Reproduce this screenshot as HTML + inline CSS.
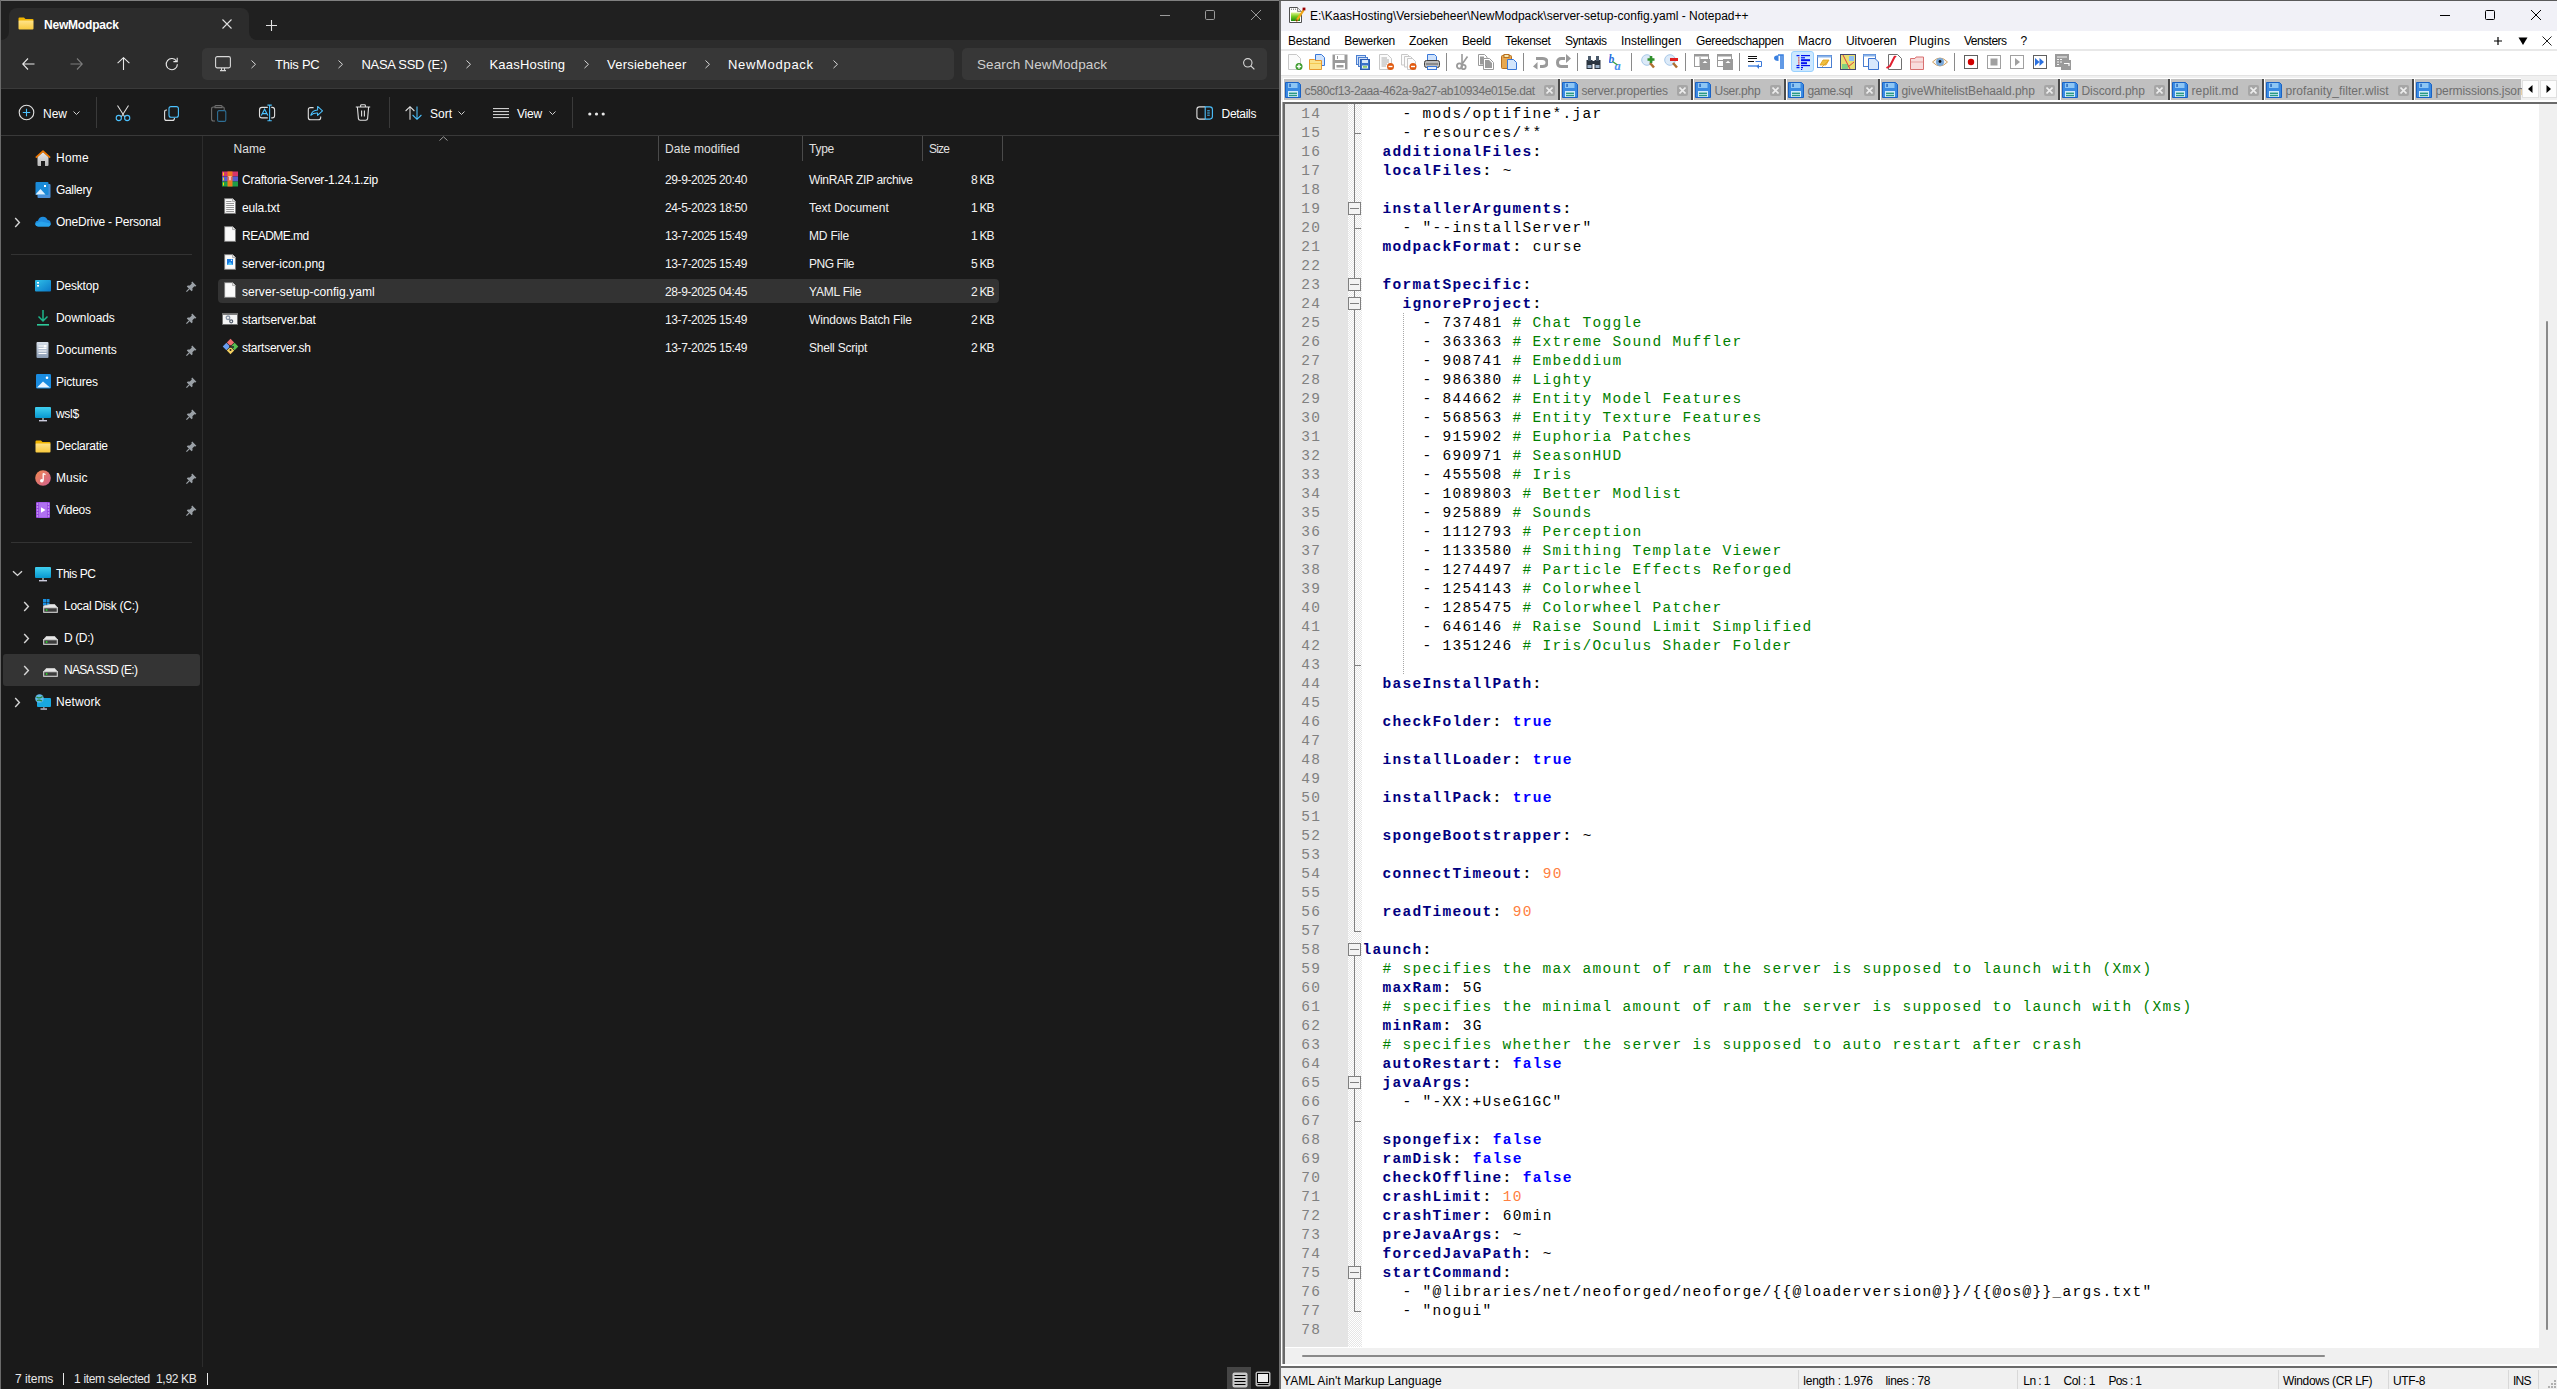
<!DOCTYPE html>
<html><head><meta charset="utf-8">
<style>
*{margin:0;padding:0;box-sizing:border-box}
html,body{width:2557px;height:1389px;overflow:hidden;background:#1a1a1a;font-family:"Liberation Sans",sans-serif;position:relative}
.a{position:absolute;display:block}
.t{position:absolute;white-space:pre;line-height:1}
.mono{font-family:"Liberation Mono",monospace;margin:0;white-space:pre}
.code .d{color:#000}.code .k{color:#000080;font-weight:bold}.code .o{color:#000;font-weight:bold}.code .c{color:#008000}.code .b{color:#0000ff;font-weight:bold}.code .n{color:#ff8040}
</style></head><body>
<div class="a" style="left:0px;top:0px;width:1279px;height:1389px;background:#1a1a1a;"></div><div class="a" style="left:1px;top:1px;width:1278px;height:39px;background:#202020;"></div><div class="a" style="left:1px;top:40px;width:1278px;height:48px;background:#2c2c2c;"></div><div class="a" style="left:1px;top:88px;width:1278px;height:1px;background:#3a3a3a;"></div><div class="a" style="left:1px;top:89px;width:1278px;height:46px;background:#1a1a1a;"></div><div class="a" style="left:1px;top:135px;width:1278px;height:1px;background:#393939;"></div><div class="a" style="left:0px;top:0px;width:1279px;height:1px;background:#808080;"></div><div class="a" style="left:0px;top:0px;width:1px;height:1389px;background:#6a6a6a;"></div><div class="a" style="left:1px;top:32px;width:8px;height:8px;background:#2c2c2c;"></div><div class="a" style="left:1px;top:24px;width:8px;height:16px;background:#202020;border-bottom-right-radius:8px"></div><div class="a" style="left:249px;top:32px;width:8px;height:8px;background:#2c2c2c;"></div><div class="a" style="left:249px;top:24px;width:8px;height:16px;background:#202020;border-bottom-left-radius:8px"></div><div class="a" style="left:9px;top:8px;width:240px;height:33px;background:#2c2c2c;border-radius:8px 8px 0 0"></div><svg class="a" style="left:18px;top:17px" width="16" height="13" viewBox="0 0 16 13"><defs><linearGradient id="fg1817" x1="0" y1="0" x2="0" y2="1"><stop offset="0" stop-color="#ffe38a"/><stop offset="1" stop-color="#f8c93d"/></linearGradient></defs>
<path d="M0.5 1.5 Q0.5 0.5 1.5 0.5 H6 L7.5 2 H14.5 Q15.5 2 15.5 3 V4 H0.5Z" fill="#f0b400"/>
<rect x="0.5" y="3.5" width="15" height="9" rx="1" fill="url(#fg1817)"/></svg><div class="t" style="left:44px;top:18.84px;font-size:12px;color:#fff;font-weight:700;letter-spacing:-0.199px;">NewModpack</div><svg class="a" style="left:222px;top:19px" width="10" height="10" viewBox="0 0 10 10"><path d="M0.5 0.5L9.5 9.5M9.5 0.5L0.5 9.5" stroke="#e0e0e0" stroke-width="1.1"/></svg><svg class="a" style="left:266px;top:20px" width="11" height="11" viewBox="0 0 11 11"><path d="M5.5 0V11M0 5.5H11" stroke="#e0e0e0" stroke-width="1.1"/></svg><div class="a" style="left:1160px;top:15px;width:10px;height:1px;background:#9a9a9a;"></div><svg class="a" style="left:1205px;top:10px" width="10" height="10" viewBox="0 0 10 10"><rect x="0.5" y="0.5" width="9" height="9" rx="1.2" fill="none" stroke="#9a9a9a" stroke-width="1"/></svg><svg class="a" style="left:1251px;top:10px" width="10" height="10" viewBox="0 0 10 10"><path d="M0 0L10 10M10 0L0 10" stroke="#9a9a9a" stroke-width="1"/></svg><svg class="a" style="left:22px;top:58px" width="13" height="12" viewBox="0 0 13 12"><path d="M6 0.5L0.7 6L6 11.5M0.7 6H12.5" fill="none" stroke="#e8e8e8" stroke-width="1.1"/></svg><svg class="a" style="left:70px;top:58px" width="13" height="12" viewBox="0 0 13 12"><path d="M7 0.5L12.3 6L7 11.5M12.3 6H0.5" fill="none" stroke="#7c7c7c" stroke-width="1.1"/></svg><svg class="a" style="left:117px;top:57px" width="13" height="13" viewBox="0 0 13 13"><path d="M0.6 6.2L6.5 0.7L12.4 6.2M6.5 0.7V13" fill="none" stroke="#e8e8e8" stroke-width="1.1"/></svg><svg class="a" style="left:165px;top:57px" width="14" height="14" viewBox="0 0 14 14"><path d="M11.6 4.2A5.6 5.6 0 1 0 12.4 7.2" fill="none" stroke="#e8e8e8" stroke-width="1.15"/><path d="M12.2 0.8V4.6H8.4" fill="none" stroke="#e8e8e8" stroke-width="1.1"/></svg><div class="a" style="left:202px;top:48px;width:752px;height:32px;background:#373737;border-radius:5px"></div><svg class="a" style="left:215px;top:56px" width="16" height="16" viewBox="0 0 16 16"><rect x="0.6" y="0.6" width="14.8" height="11.3" rx="1.6" fill="none" stroke="#d8d8d8" stroke-width="1.1"/><path d="M5 14.6H11M6.5 12V14.6M9.5 12V14.6" stroke="#d8d8d8" stroke-width="1.1"/></svg><svg class="a" style="left:251px;top:60px" width="6" height="9" viewBox="0 0 6 9"><path d="M0.5 0.5L4.5 4.3L0.5 8.1" fill="none" stroke="#d8d8d8" stroke-width="1"/></svg><svg class="a" style="left:338px;top:60px" width="6" height="9" viewBox="0 0 6 9"><path d="M0.5 0.5L4.5 4.3L0.5 8.1" fill="none" stroke="#d8d8d8" stroke-width="1"/></svg><svg class="a" style="left:466px;top:60px" width="6" height="9" viewBox="0 0 6 9"><path d="M0.5 0.5L4.5 4.3L0.5 8.1" fill="none" stroke="#d8d8d8" stroke-width="1"/></svg><svg class="a" style="left:584px;top:60px" width="6" height="9" viewBox="0 0 6 9"><path d="M0.5 0.5L4.5 4.3L0.5 8.1" fill="none" stroke="#d8d8d8" stroke-width="1"/></svg><svg class="a" style="left:705px;top:60px" width="6" height="9" viewBox="0 0 6 9"><path d="M0.5 0.5L4.5 4.3L0.5 8.1" fill="none" stroke="#d8d8d8" stroke-width="1"/></svg><svg class="a" style="left:833px;top:60px" width="6" height="9" viewBox="0 0 6 9"><path d="M0.5 0.5L4.5 4.3L0.5 8.1" fill="none" stroke="#d8d8d8" stroke-width="1"/></svg><div class="t" style="left:275px;top:58.00px;font-size:13px;color:#fff;letter-spacing:-0.248px;">This PC</div><div class="t" style="left:361.5px;top:58.00px;font-size:13px;color:#fff;letter-spacing:-0.306px;">NASA SSD (E:)</div><div class="t" style="left:489.5px;top:58.00px;font-size:13px;color:#fff;letter-spacing:0.189px;">KaasHosting</div><div class="t" style="left:607px;top:58.00px;font-size:13px;color:#fff;letter-spacing:0.24px;">Versiebeheer</div><div class="t" style="left:728px;top:58.00px;font-size:13px;color:#fff;letter-spacing:0.693px;">NewModpack</div><div class="a" style="left:962px;top:48px;width:305px;height:32px;background:#373737;border-radius:5px"></div><div class="t" style="left:977px;top:57.57px;font-size:13.5px;color:#cfcfcf;letter-spacing:0.111px;">Search NewModpack</div><svg class="a" style="left:1243px;top:58px" width="12" height="12" viewBox="0 0 12 12"><circle cx="4.8" cy="4.8" r="4.2" fill="none" stroke="#d8d8d8" stroke-width="1.1"/><path d="M7.8 7.8L11.4 11.4" stroke="#d8d8d8" stroke-width="1.2"/></svg><svg class="a" style="left:18px;top:104px" width="17" height="17" viewBox="0 0 17 17"><circle cx="8.5" cy="8.5" r="7.3" fill="none" stroke="#e0e0e0" stroke-width="1.1"/><path d="M8.5 4.8V12.2M4.8 8.5H12.2" stroke="#4cc2ff" stroke-width="1.1"/></svg><div class="t" style="left:43px;top:107.84px;font-size:12px;color:#fff;letter-spacing:-0.005px;">New</div><svg class="a" style="left:73px;top:111px" width="7" height="5" viewBox="0 0 7 5"><path d="M0.5 0.5L3.5 3.5L6.5 0.5" fill="none" stroke="#cfcfcf" stroke-width="1"/></svg><div class="a" style="left:96px;top:97px;width:1px;height:31px;background:#3a3a3a;"></div><svg class="a" style="left:115px;top:105px" width="16" height="17" viewBox="0 0 16 17"><path d="M2.5 0.5L9.8 12M13.5 0.5L6.2 12" stroke="#e0e0e0" stroke-width="1.05" fill="none"/><circle cx="3.8" cy="13" r="2.6" fill="none" stroke="#4cc2ff" stroke-width="1.1"/><circle cx="12.2" cy="13" r="2.6" fill="none" stroke="#4cc2ff" stroke-width="1.1"/></svg><svg class="a" style="left:164px;top:106px" width="15" height="15" viewBox="0 0 15 15"><path d="M3 4H2.6Q0.6 4 0.6 6V12.4Q0.6 14.4 2.6 14.4H8.4Q10.4 14.4 10.4 12.4V12" fill="none" stroke="#e0e0e0" stroke-width="1.1"/><rect x="5" y="0.6" width="9.4" height="10.6" rx="2" fill="none" stroke="#4cc2ff" stroke-width="1.1"/></svg><svg class="a" style="left:211px;top:105px" width="16" height="17" viewBox="0 0 16 17"><path d="M4 2H2.5Q0.6 2 0.6 4V14Q0.6 16 2.5 16H4" fill="none" stroke="#6e6e6e" stroke-width="1.1"/><path d="M4 1.2Q4 0.6 5 0.6H10Q11 0.6 11 1.2V2.6H4Z" fill="none" stroke="#6e6e6e" stroke-width="1.1"/><path d="M11 2H12Q13.2 2 13.2 3.5V5" fill="none" stroke="#6e6e6e" stroke-width="1.1"/><rect x="6.6" y="5.6" width="8.2" height="10.8" rx="1.5" fill="none" stroke="#2f6f95" stroke-width="1.1"/></svg><svg class="a" style="left:258px;top:104px" width="18" height="18" viewBox="0 0 18 18"><path d="M9.8 3.4H4Q1.5 3.4 1.5 5.9V11.4Q1.5 13.9 4 13.9H9.8M13.2 3.4H14.3Q16.6 3.4 16.6 5.9V11.4Q16.6 13.9 14.3 13.9H13.2" fill="none" stroke="#e0e0e0" stroke-width="1.1"/><path d="M3.3 11.6L6.6 5.2L9.9 11.6M4.5 9.6H8.7" fill="none" stroke="#4cc2ff" stroke-width="1.1"/><path d="M11.6 1.4V16.4M9.4 1.1H13.8M9.4 16.7H13.8" stroke="#4cc2ff" stroke-width="1.1"/></svg><svg class="a" style="left:307px;top:105px" width="17" height="16" viewBox="0 0 17 16"><path d="M6.6 2.6H3.6Q1.3 2.6 1.3 4.9V12.4Q1.3 14.7 3.6 14.7H11.4Q13.7 14.7 13.7 12.4V11.6" fill="none" stroke="#e0e0e0" stroke-width="1.1"/><path d="M3.8 10.3Q5.2 5.4 10.6 5.1V1.4L15.5 5.8L10.6 10.4V8.1Q6.4 7.9 3.8 10.3Z" fill="none" stroke="#4cc2ff" stroke-width="1.05" stroke-linejoin="round"/></svg><svg class="a" style="left:355px;top:104px" width="16" height="17" viewBox="0 0 16 17"><path d="M0.8 3H15.2M5.6 3V1.6Q5.6 0.8 6.6 0.8H9.4Q10.4 0.8 10.4 1.6V3M2.4 3.2L3.4 14.6Q3.6 16.2 5.2 16.2H10.8Q12.4 16.2 12.6 14.6L13.6 3.2M6.6 6.6V12.6M9.4 6.6V12.6" fill="none" stroke="#e0e0e0" stroke-width="1.1"/></svg><div class="a" style="left:389px;top:97px;width:1px;height:31px;background:#3a3a3a;"></div><svg class="a" style="left:405px;top:106px" width="18" height="14" viewBox="0 0 18 14"><path d="M0.6 5L5 0.7L9.4 5M5 0.7V13.8" fill="none" stroke="#e0e0e0" stroke-width="1.05"/><path d="M7.6 9L12 13.3L16.4 9M12 0.4V13.3" fill="none" stroke="#4cc2ff" stroke-width="1.05"/></svg><div class="t" style="left:430px;top:107.84px;font-size:12px;color:#fff;letter-spacing:-0.004px;">Sort</div><svg class="a" style="left:458px;top:111px" width="7" height="5" viewBox="0 0 7 5"><path d="M0.5 0.5L3.5 3.5L6.5 0.5" fill="none" stroke="#cfcfcf" stroke-width="1"/></svg><svg class="a" style="left:493px;top:108px" width="17" height="11" viewBox="0 0 17 11"><path d="M0 0.6H16M0 3.6H16M0 6.6H16M0 9.6H16" stroke="#e0e0e0" stroke-width="1"/></svg><div class="t" style="left:517px;top:107.84px;font-size:12px;color:#fff;letter-spacing:-0.199px;">View</div><svg class="a" style="left:549px;top:111px" width="7" height="5" viewBox="0 0 7 5"><path d="M0.5 0.5L3.5 3.5L6.5 0.5" fill="none" stroke="#cfcfcf" stroke-width="1"/></svg><div class="a" style="left:572px;top:97px;width:1px;height:31px;background:#3a3a3a;"></div><svg class="a" style="left:588px;top:112px" width="17" height="4" viewBox="0 0 17 4"><circle cx="1.8" cy="2" r="1.6" fill="#e8e8e8"/><circle cx="8.5" cy="2" r="1.6" fill="#e8e8e8"/><circle cx="15.2" cy="2" r="1.6" fill="#e8e8e8"/></svg><svg class="a" style="left:1196px;top:106px" width="18" height="14" viewBox="0 0 18 14"><path d="M9.2 0.9H3.4Q0.9 0.9 0.9 3.4V10.6Q0.9 13.1 3.4 13.1H9.2" fill="none" stroke="#e0e0e0" stroke-width="1.1"/><path d="M9.2 0.9H13.8Q16.4 0.9 16.4 3.4V10.6Q16.4 13.1 13.8 13.1H9.2Z" fill="none" stroke="#4cc2ff" stroke-width="1.1"/><path d="M11.2 4.8H13.8M11.2 7H13.8M11.2 9.2H13.8" stroke="#4cc2ff" stroke-width="1"/></svg><div class="t" style="left:1221.5px;top:107.84px;font-size:12px;color:#fff;letter-spacing:-0.284px;">Details</div><div class="a" style="left:202px;top:136px;width:1px;height:1231px;background:#2c2c2c;"></div><div class="t" style="left:233.5px;top:142.84px;font-size:12px;color:#e0e0e0;letter-spacing:0.021px;">Name</div><svg class="a" style="left:439px;top:136px" width="9" height="5" viewBox="0 0 9 5"><path d="M0.5 4.5L4.5 0.8L8.5 4.5" fill="none" stroke="#9a9a9a" stroke-width="1"/></svg><div class="a" style="left:658px;top:136px;width:1px;height:25px;background:#4a4a4a;"></div><div class="a" style="left:802px;top:136px;width:1px;height:25px;background:#4a4a4a;"></div><div class="a" style="left:922px;top:136px;width:1px;height:25px;background:#4a4a4a;"></div><div class="a" style="left:1002px;top:136px;width:1px;height:25px;background:#4a4a4a;"></div><div class="t" style="left:665px;top:142.84px;font-size:12px;color:#e0e0e0;letter-spacing:0.058px;">Date modified</div><div class="t" style="left:809px;top:142.84px;font-size:12px;color:#e0e0e0;letter-spacing:-0.254px;">Type</div><div class="t" style="left:929px;top:142.84px;font-size:12px;color:#e0e0e0;letter-spacing:-0.836px;">Size</div><div class="a" style="left:218px;top:279px;width:781px;height:24px;background:#333333;border-radius:4px"></div><svg class="a" style="left:222px;top:171px" width="16" height="16" viewBox="0 0 16 16"><rect x="0" y="0.5" width="16" height="5" fill="#d8356a"/><rect x="0" y="5.5" width="16" height="5" fill="#5a5ed0"/><rect x="0" y="10.5" width="16" height="5" fill="#1e9e48"/><rect x="5.5" y="0.5" width="5" height="15" fill="#f07a20"/><rect x="6" y="5.3" width="4" height="4" fill="#fff"/><path d="M6.8 5.5V9.5M9.2 5.5V9.5" stroke="#d02020" stroke-width="1"/><rect x="1" y="1.5" width="1" height="3" fill="#f8e000"/><rect x="1" y="6.5" width="1" height="3" fill="#f8e000"/><rect x="1" y="11.5" width="1" height="3" fill="#f8e000"/></svg><div class="t" style="left:242px;top:173.84px;font-size:12px;color:#fff;letter-spacing:-0.2px;">Craftoria-Server-1.24.1.zip</div><div class="t" style="left:665px;top:173.84px;font-size:12px;color:#f2f2f2;letter-spacing:-0.405px;">29-9-2025 20:40</div><div class="t" style="left:809px;top:173.84px;font-size:12px;color:#f2f2f2;letter-spacing:-0.34px;">WinRAR ZIP archive</div><div class="t" style="right:1563.20px;top:173.84px;font-size:12px;color:#f2f2f2;letter-spacing:-0.804px;">8 KB</div><svg class="a" style="left:224px;top:198px" width="12" height="16" viewBox="0 0 12 16"><path d="M0.6 0.6H8.6L11.6 3.6V15.4H0.6Z" fill="#fafafa" stroke="#7a7a7a" stroke-width="1"/><path d="M8.6 0.6V3.6H11.6" fill="#e8e8e8" stroke="#9a9a9a" stroke-width="0.8"/><path d="M2.2 3.5H7.5M2.2 5.5H10M2.2 7.5H10M2.2 9.5H10M2.2 11.5H10M2.2 13.5H10" stroke="#8a8a8a" stroke-width="0.9"/></svg><div class="t" style="left:242px;top:201.84px;font-size:12px;color:#fff;letter-spacing:-0.138px;">eula.txt</div><div class="t" style="left:665px;top:201.84px;font-size:12px;color:#f2f2f2;letter-spacing:-0.405px;">24-5-2023 18:50</div><div class="t" style="left:809px;top:201.84px;font-size:12px;color:#f2f2f2;letter-spacing:-0.027px;">Text Document</div><div class="t" style="right:1563.20px;top:201.84px;font-size:12px;color:#f2f2f2;letter-spacing:-0.804px;">1 KB</div><svg class="a" style="left:224px;top:226px" width="12" height="16" viewBox="0 0 12 16"><path d="M0.6 0.6H8.6L11.6 3.6V15.4H0.6Z" fill="#fafafa" stroke="#7a7a7a" stroke-width="1"/><path d="M8.6 0.6V3.6H11.6" fill="#e8e8e8" stroke="#9a9a9a" stroke-width="0.8"/></svg><div class="t" style="left:242px;top:229.84px;font-size:12px;color:#fff;letter-spacing:-0.516px;">README.md</div><div class="t" style="left:665px;top:229.84px;font-size:12px;color:#f2f2f2;letter-spacing:-0.405px;">13-7-2025 15:49</div><div class="t" style="left:809px;top:229.84px;font-size:12px;color:#f2f2f2;letter-spacing:-0.192px;">MD File</div><div class="t" style="right:1563.20px;top:229.84px;font-size:12px;color:#f2f2f2;letter-spacing:-0.804px;">1 KB</div><svg class="a" style="left:224px;top:254px" width="12" height="16" viewBox="0 0 12 16"><path d="M0.6 0.6H8.6L11.6 3.6V15.4H0.6Z" fill="#fafafa" stroke="#7a7a7a" stroke-width="1"/><path d="M8.6 0.6V3.6H11.6" fill="#e8e8e8" stroke="#9a9a9a" stroke-width="0.8"/><rect x="3" y="5" width="6" height="6" fill="#1a7ae0"/><path d="M3 11L6 7.8L9 11Z" fill="#5ac8fa"/><circle cx="7.5" cy="6.3" r="0.7" fill="#fff"/></svg><div class="t" style="left:242px;top:257.84px;font-size:12px;color:#fff;letter-spacing:0.005px;">server-icon.png</div><div class="t" style="left:665px;top:257.84px;font-size:12px;color:#f2f2f2;letter-spacing:-0.405px;">13-7-2025 15:49</div><div class="t" style="left:809px;top:257.84px;font-size:12px;color:#f2f2f2;letter-spacing:-0.448px;">PNG File</div><div class="t" style="right:1563.20px;top:257.84px;font-size:12px;color:#f2f2f2;letter-spacing:-0.804px;">5 KB</div><svg class="a" style="left:224px;top:282px" width="12" height="16" viewBox="0 0 12 16"><path d="M0.6 0.6H8.6L11.6 3.6V15.4H0.6Z" fill="#fafafa" stroke="#7a7a7a" stroke-width="1"/><path d="M8.6 0.6V3.6H11.6" fill="#e8e8e8" stroke="#9a9a9a" stroke-width="0.8"/></svg><div class="t" style="left:242px;top:285.84px;font-size:12px;color:#fff;letter-spacing:0.059px;">server-setup-config.yaml</div><div class="t" style="left:665px;top:285.84px;font-size:12px;color:#f2f2f2;letter-spacing:-0.405px;">28-9-2025 04:45</div><div class="t" style="left:809px;top:285.84px;font-size:12px;color:#f2f2f2;letter-spacing:-0.191px;">YAML File</div><div class="t" style="right:1563.20px;top:285.84px;font-size:12px;color:#f2f2f2;letter-spacing:-0.804px;">2 KB</div><svg class="a" style="left:222px;top:313px" width="16" height="12" viewBox="0 0 16 12"><rect x="0.5" y="0.5" width="15" height="11" fill="#f4f4f4" stroke="#707070" stroke-width="1"/><path d="M0.5 1.2H15.5" stroke="#707070" stroke-width="1.4"/><circle cx="6" cy="4.8" r="1.8" fill="none" stroke="#8a96a8" stroke-width="1.3"/><circle cx="9.2" cy="8.3" r="1.5" fill="none" stroke="#505a68" stroke-width="1.2"/><path d="M6.8 6.4L8.2 7.4" stroke="#6a7482" stroke-width="1"/></svg><div class="t" style="left:242px;top:313.84px;font-size:12px;color:#fff;letter-spacing:-0.149px;">startserver.bat</div><div class="t" style="left:665px;top:313.84px;font-size:12px;color:#f2f2f2;letter-spacing:-0.405px;">13-7-2025 15:49</div><div class="t" style="left:809px;top:313.84px;font-size:12px;color:#f2f2f2;letter-spacing:-0.149px;">Windows Batch File</div><div class="t" style="right:1563.20px;top:313.84px;font-size:12px;color:#f2f2f2;letter-spacing:-0.804px;">2 KB</div><svg class="a" style="left:222px;top:338px" width="17" height="17" viewBox="0 0 17 17"><g transform="rotate(45 8.5 8.5)"><rect x="3" y="3" width="5.2" height="5.2" fill="#f07070"/><rect x="8.8" y="3" width="5.2" height="5.2" fill="#58c050"/><rect x="3" y="8.8" width="5.2" height="5.2" fill="#6a9ef0"/><rect x="8.8" y="8.8" width="5.2" height="5.2" fill="#f4d060"/></g><circle cx="8.5" cy="8.5" r="1.2" fill="#222"/><circle cx="11" cy="9" r="1" fill="#222"/><circle cx="8.5" cy="12" r="1" fill="#222"/></svg><div class="t" style="left:242px;top:341.84px;font-size:12px;color:#fff;letter-spacing:-0.238px;">startserver.sh</div><div class="t" style="left:665px;top:341.84px;font-size:12px;color:#f2f2f2;letter-spacing:-0.405px;">13-7-2025 15:49</div><div class="t" style="left:809px;top:341.84px;font-size:12px;color:#f2f2f2;letter-spacing:-0.225px;">Shell Script</div><div class="t" style="right:1563.20px;top:341.84px;font-size:12px;color:#f2f2f2;letter-spacing:-0.804px;">2 KB</div><div class="a" style="left:11px;top:254px;width:181px;height:1px;background:#333333;"></div><div class="a" style="left:11px;top:542px;width:181px;height:1px;background:#333333;"></div><div class="a" style="left:3px;top:654px;width:197px;height:32px;background:#343434;border-radius:3px"></div><svg class="a" style="left:35px;top:150px" width="16" height="17" viewBox="0 0 16 17"><defs><linearGradient id="hg" x1="0" y1="0" x2="0" y2="1"><stop offset="0" stop-color="#e8e8e8"/><stop offset="1" stop-color="#b8b8b8"/></linearGradient></defs><path d="M2.5 7L8 2L13.5 7V15Q13.5 16 12.5 16H10V11H6V16H3.5Q2.5 16 2.5 15Z" fill="url(#hg)"/><path d="M0.8 7.6L8 1.2L15.2 7.6" fill="none" stroke="#f07800" stroke-width="1.6" stroke-linejoin="round"/></svg><div class="t" style="left:56px;top:151.84px;font-size:12px;color:#fff;letter-spacing:0.246px;">Home</div><svg class="a" style="left:35px;top:182px" width="16" height="16" viewBox="0 0 16 16"><rect x="2.5" y="2" width="13" height="14" rx="1" fill="#4a90d8"/><rect x="0.5" y="0" width="13" height="13" rx="1" fill="#1a8ad8"/><path d="M0.5 12.5L5.5 7L10.5 12.5Z" fill="#dff0ff"/><rect x="9" y="3" width="2" height="2" fill="#fff"/></svg><div class="t" style="left:56px;top:183.84px;font-size:12px;color:#fff;letter-spacing:-0.317px;">Gallery</div><svg class="a" style="left:35px;top:216px" width="16" height="11" viewBox="0 0 16 11"><path d="M3.5 10.5Q0.3 10.5 0.3 7.6Q0.3 5 3 4.8Q4 0.8 8 0.8Q11.3 0.8 12.4 3.8Q15.7 4.2 15.7 7.4Q15.7 10.5 12.5 10.5Z" fill="#1f8ee0"/><path d="M3.5 10.5Q0.3 10.5 0.3 7.6L6 5.6L15.7 7.4Q15.7 10.5 12.5 10.5Z" fill="#29a4ec"/></svg><div class="t" style="left:56px;top:215.84px;font-size:12px;color:#fff;letter-spacing:-0.217px;">OneDrive - Personal</div><svg class="a" style="left:14px;top:217px" width="7" height="11" viewBox="0 0 7 11"><path d="M1.2 1L5.4 5.5L1.2 10" fill="none" stroke="#d6d6d6" stroke-width="1.4"/></svg><svg class="a" style="left:35px;top:280px" width="16" height="12" viewBox="0 0 16 12"><defs><linearGradient id="dg" x1="0" y1="0" x2="1" y2="1"><stop offset="0" stop-color="#30c0e8"/><stop offset="1" stop-color="#0a78c8"/></linearGradient></defs><rect x="0" y="0" width="16" height="11.5" rx="1" fill="url(#dg)"/><rect x="2" y="2" width="2" height="1.6" fill="#fff"/><rect x="2" y="5" width="2" height="1.6" fill="#fff"/></svg><div class="t" style="left:56px;top:279.84px;font-size:12px;color:#fff;letter-spacing:-0.19px;">Desktop</div><svg class="a" style="left:186px;top:281px" width="11" height="11" viewBox="0 0 11 11"><path d="M6.2 0.6L10.4 4.8L9.4 5.6L8.4 5.2L6.4 7.2L6.6 9.2L5.6 10.2L0.8 5.4L1.8 4.4L3.8 4.6L5.8 2.6L5.4 1.6Z" fill="#9aa0a6"/><path d="M3.2 7.8L0.4 10.6" stroke="#9aa0a6" stroke-width="1.2"/></svg><svg class="a" style="left:35px;top:310px" width="16" height="16" viewBox="0 0 16 16"><path d="M8 0V10.5M3.5 6.5L8 11L12.5 6.5" fill="none" stroke="#1db58a" stroke-width="1.5"/><rect x="2" y="14" width="12" height="1.6" fill="#2ec89a"/></svg><div class="t" style="left:56px;top:311.84px;font-size:12px;color:#fff;letter-spacing:-0.064px;">Downloads</div><svg class="a" style="left:186px;top:313px" width="11" height="11" viewBox="0 0 11 11"><path d="M6.2 0.6L10.4 4.8L9.4 5.6L8.4 5.2L6.4 7.2L6.6 9.2L5.6 10.2L0.8 5.4L1.8 4.4L3.8 4.6L5.8 2.6L5.4 1.6Z" fill="#9aa0a6"/><path d="M3.2 7.8L0.4 10.6" stroke="#9aa0a6" stroke-width="1.2"/></svg><svg class="a" style="left:36px;top:342px" width="13" height="16" viewBox="0 0 13 16"><defs><linearGradient id="docg" x1="0" y1="0" x2="0" y2="1"><stop offset="0" stop-color="#d8e0ea"/><stop offset="1" stop-color="#8a9cb4"/></linearGradient></defs><rect x="0.5" y="0" width="12" height="16" rx="1" fill="url(#docg)"/><path d="M2.5 4H7M2.5 6.5H10.5M2.5 9H10.5M2.5 11.5H10.5" stroke="#fff" stroke-width="1"/><rect x="7.5" y="3" width="3" height="2.5" fill="#fff"/></svg><div class="t" style="left:56px;top:343.84px;font-size:12px;color:#fff;letter-spacing:0.011px;">Documents</div><svg class="a" style="left:186px;top:345px" width="11" height="11" viewBox="0 0 11 11"><path d="M6.2 0.6L10.4 4.8L9.4 5.6L8.4 5.2L6.4 7.2L6.6 9.2L5.6 10.2L0.8 5.4L1.8 4.4L3.8 4.6L5.8 2.6L5.4 1.6Z" fill="#9aa0a6"/><path d="M3.2 7.8L0.4 10.6" stroke="#9aa0a6" stroke-width="1.2"/></svg><svg class="a" style="left:36px;top:374px" width="15" height="15" viewBox="0 0 15 15"><rect x="0" y="0" width="15" height="14.5" rx="1.2" fill="#1a8ce0"/><path d="M1 13.5L7 7.6L14 13.5Z" fill="#e8f4ff"/><circle cx="11" cy="3.8" r="1.3" fill="#fff"/></svg><div class="t" style="left:56px;top:375.84px;font-size:12px;color:#fff;letter-spacing:-0.182px;">Pictures</div><svg class="a" style="left:186px;top:377px" width="11" height="11" viewBox="0 0 11 11"><path d="M6.2 0.6L10.4 4.8L9.4 5.6L8.4 5.2L6.4 7.2L6.6 9.2L5.6 10.2L0.8 5.4L1.8 4.4L3.8 4.6L5.8 2.6L5.4 1.6Z" fill="#9aa0a6"/><path d="M3.2 7.8L0.4 10.6" stroke="#9aa0a6" stroke-width="1.2"/></svg><svg class="a" style="left:35px;top:407px" width="16" height="15" viewBox="0 0 16 15"><defs><linearGradient id="mg" x1="0" y1="0" x2="0" y2="1"><stop offset="0" stop-color="#40d0f0"/><stop offset="1" stop-color="#0898d0"/></linearGradient></defs><rect x="0" y="0" width="16" height="11" rx="1" fill="url(#mg)"/><rect x="7.2" y="11" width="1.6" height="2.2" fill="#9aa"/><rect x="4" y="13" width="8" height="1.4" fill="#ccd"/></svg><div class="t" style="left:56px;top:407.84px;font-size:12px;color:#fff;letter-spacing:-0.304px;">wsl$</div><svg class="a" style="left:186px;top:409px" width="11" height="11" viewBox="0 0 11 11"><path d="M6.2 0.6L10.4 4.8L9.4 5.6L8.4 5.2L6.4 7.2L6.6 9.2L5.6 10.2L0.8 5.4L1.8 4.4L3.8 4.6L5.8 2.6L5.4 1.6Z" fill="#9aa0a6"/><path d="M3.2 7.8L0.4 10.6" stroke="#9aa0a6" stroke-width="1.2"/></svg><svg class="a" style="left:35px;top:440px" width="16" height="13" viewBox="0 0 16 13"><defs><linearGradient id="fg35440" x1="0" y1="0" x2="0" y2="1"><stop offset="0" stop-color="#ffe38a"/><stop offset="1" stop-color="#f8c93d"/></linearGradient></defs>
<path d="M0.5 1.5 Q0.5 0.5 1.5 0.5 H6 L7.5 2 H14.5 Q15.5 2 15.5 3 V4 H0.5Z" fill="#f0b400"/>
<rect x="0.5" y="3.5" width="15" height="9" rx="1" fill="url(#fg35440)"/></svg><div class="t" style="left:56px;top:439.84px;font-size:12px;color:#fff;letter-spacing:-0.223px;">Declaratie</div><svg class="a" style="left:186px;top:441px" width="11" height="11" viewBox="0 0 11 11"><path d="M6.2 0.6L10.4 4.8L9.4 5.6L8.4 5.2L6.4 7.2L6.6 9.2L5.6 10.2L0.8 5.4L1.8 4.4L3.8 4.6L5.8 2.6L5.4 1.6Z" fill="#9aa0a6"/><path d="M3.2 7.8L0.4 10.6" stroke="#9aa0a6" stroke-width="1.2"/></svg><svg class="a" style="left:35px;top:470px" width="16" height="16" viewBox="0 0 16 16"><defs><linearGradient id="mug" x1="0" y1="0" x2="1" y2="1"><stop offset="0" stop-color="#f08850"/><stop offset="1" stop-color="#d06090"/></linearGradient></defs><circle cx="8" cy="8" r="7.8" fill="url(#mug)"/><path d="M8.2 3.5V10.5" stroke="#fff" stroke-width="1.3"/><circle cx="6.8" cy="10.8" r="1.8" fill="#fff"/><path d="M8.2 3.5L10.5 4.6" stroke="#fff" stroke-width="1.3"/></svg><div class="t" style="left:56px;top:471.84px;font-size:12px;color:#fff;letter-spacing:0.051px;">Music</div><svg class="a" style="left:186px;top:473px" width="11" height="11" viewBox="0 0 11 11"><path d="M6.2 0.6L10.4 4.8L9.4 5.6L8.4 5.2L6.4 7.2L6.6 9.2L5.6 10.2L0.8 5.4L1.8 4.4L3.8 4.6L5.8 2.6L5.4 1.6Z" fill="#9aa0a6"/><path d="M3.2 7.8L0.4 10.6" stroke="#9aa0a6" stroke-width="1.2"/></svg><svg class="a" style="left:36px;top:502px" width="14" height="16" viewBox="0 0 14 16"><rect x="0" y="0" width="14" height="16" rx="1" fill="#9848e0"/><rect x="3" y="0.5" width="8" height="15" fill="#b070f0"/><path d="M5 5.2V10.8L9.6 8Z" fill="#fff"/><path d="M0.8 2H2.2M0.8 5H2.2M0.8 8H2.2M0.8 11H2.2M0.8 14H2.2M11.8 2H13.2M11.8 5H13.2M11.8 8H13.2M11.8 11H13.2M11.8 14H13.2" stroke="#e8d8ff" stroke-width="1"/></svg><div class="t" style="left:56px;top:503.84px;font-size:12px;color:#fff;letter-spacing:-0.297px;">Videos</div><svg class="a" style="left:186px;top:505px" width="11" height="11" viewBox="0 0 11 11"><path d="M6.2 0.6L10.4 4.8L9.4 5.6L8.4 5.2L6.4 7.2L6.6 9.2L5.6 10.2L0.8 5.4L1.8 4.4L3.8 4.6L5.8 2.6L5.4 1.6Z" fill="#9aa0a6"/><path d="M3.2 7.8L0.4 10.6" stroke="#9aa0a6" stroke-width="1.2"/></svg><svg class="a" style="left:12px;top:514px" width="1" height="1" viewBox="0 0 1 1"></svg><svg class="a" style="left:12px;top:570px" width="11" height="7" viewBox="0 0 11 7"><path d="M1 1.2L5.5 5.4L10 1.2" fill="none" stroke="#d6d6d6" stroke-width="1.4"/></svg><svg class="a" style="left:35px;top:567px" width="16" height="15" viewBox="0 0 16 15"><defs><linearGradient id="mg" x1="0" y1="0" x2="0" y2="1"><stop offset="0" stop-color="#40d0f0"/><stop offset="1" stop-color="#0898d0"/></linearGradient></defs><rect x="0" y="0" width="16" height="11" rx="1" fill="url(#mg)"/><rect x="7.2" y="11" width="1.6" height="2.2" fill="#9aa"/><rect x="4" y="13" width="8" height="1.4" fill="#ccd"/></svg><div class="t" style="left:56px;top:567.84px;font-size:12px;color:#fff;letter-spacing:-0.455px;">This PC</div><svg class="a" style="left:23px;top:601px" width="7" height="11" viewBox="0 0 7 11"><path d="M1.2 1L5.4 5.5L1.2 10" fill="none" stroke="#d6d6d6" stroke-width="1.4"/></svg><svg class="a" style="left:43px;top:599px" width="15" height="14" viewBox="0 0 15 14"><rect x="0" y="0" width="3" height="3" fill="#1a90e0"/><rect x="3.5" y="0" width="3" height="3" fill="#1a90e0"/><rect x="0" y="3.5" width="3" height="3" fill="#1a90e0"/><rect x="3.5" y="3.5" width="3" height="3" fill="#1a90e0"/><path d="M7 5.5H11.8L14.5 8.8H0.5V7Z" fill="#e6e6e6" stroke="#cfcfcf" stroke-width="0.8"/><rect x="0.7" y="8.7" width="13.6" height="4.6" fill="#3c3c3c" stroke="#d4d4d4" stroke-width="1.1"/><rect x="2.8" y="10.2" width="1.6" height="1.6" fill="#28e028"/></svg><div class="t" style="left:64px;top:599.84px;font-size:12px;color:#fff;letter-spacing:-0.286px;">Local Disk (C:)</div><svg class="a" style="left:23px;top:633px" width="7" height="11" viewBox="0 0 7 11"><path d="M1.2 1L5.4 5.5L1.2 10" fill="none" stroke="#d6d6d6" stroke-width="1.4"/></svg><svg class="a" style="left:43px;top:636px" width="15" height="9" viewBox="0 0 15 9"><path d="M3.2 0.5H11.8L14.5 3.8H0.5Z" fill="#e6e6e6" stroke="#cfcfcf" stroke-width="0.8"/><rect x="0.7" y="3.7" width="13.6" height="4.6" fill="#3c3c3c" stroke="#d4d4d4" stroke-width="1.1"/><rect x="2.8" y="5.2" width="1.6" height="1.6" fill="#28e028"/></svg><div class="t" style="left:64px;top:631.84px;font-size:12px;color:#fff;letter-spacing:-0.383px;">D (D:)</div><svg class="a" style="left:23px;top:665px" width="7" height="11" viewBox="0 0 7 11"><path d="M1.2 1L5.4 5.5L1.2 10" fill="none" stroke="#d6d6d6" stroke-width="1.4"/></svg><svg class="a" style="left:43px;top:668px" width="15" height="9" viewBox="0 0 15 9"><path d="M3.2 0.5H11.8L14.5 3.8H0.5Z" fill="#e6e6e6" stroke="#cfcfcf" stroke-width="0.8"/><rect x="0.7" y="3.7" width="13.6" height="4.6" fill="#3c3c3c" stroke="#d4d4d4" stroke-width="1.1"/><rect x="2.8" y="5.2" width="1.6" height="1.6" fill="#28e028"/></svg><div class="t" style="left:64px;top:663.84px;font-size:12px;color:#fff;letter-spacing:-0.73px;">NASA SSD (E:)</div><svg class="a" style="left:14px;top:697px" width="7" height="11" viewBox="0 0 7 11"><path d="M1.2 1L5.4 5.5L1.2 10" fill="none" stroke="#d6d6d6" stroke-width="1.4"/></svg><svg class="a" style="left:35px;top:694px" width="16" height="16" viewBox="0 0 16 16"><rect x="2" y="4" width="14" height="9" rx="1" fill="#18a8e0"/><rect x="8" y="13" width="1.6" height="1.6" fill="#889"/><rect x="5.5" y="14.4" width="6.5" height="1.3" fill="#ccd"/><circle cx="4.5" cy="4.5" r="4.3" fill="#60b8e8"/><path d="M1.5 3Q4 5 7.5 2.5M2 6.5Q4.5 5.5 7 7" stroke="#2a8a3a" stroke-width="1.2" fill="none"/></svg><div class="t" style="left:56px;top:695.84px;font-size:12px;color:#fff;letter-spacing:0.098px;">Network</div><div class="t" style="left:15px;top:1372.84px;font-size:12px;color:#e8e8e8;letter-spacing:-0.055px;">7 items</div><div class="a" style="left:63px;top:1373px;width:1px;height:12px;background:#e8e8e8;"></div><div class="t" style="left:74px;top:1372.84px;font-size:12px;color:#e8e8e8;letter-spacing:-0.316px;">1 item selected  1,92 KB</div><div class="a" style="left:207px;top:1373px;width:1px;height:12px;background:#e8e8e8;"></div><div class="a" style="left:1227px;top:1367px;width:24px;height:22px;background:#454545;"></div><svg class="a" style="left:1232px;top:1372px" width="16" height="16" viewBox="0 0 16 16"><rect x="0.5" y="0.5" width="15" height="15" rx="2" fill="#c8c8c8"/><path d="M2.5 3.5H13.5M2.5 6.5H13.5M2.5 9.5H13.5M2.5 12.5H13.5" stroke="#000" stroke-width="1"/></svg><svg class="a" style="left:1255px;top:1371px" width="16" height="16" viewBox="0 0 16 16"><rect x="0.5" y="0.5" width="15" height="15" rx="2" fill="#b8b8b8"/><rect x="2.5" y="2.5" width="11" height="9" fill="#eee" stroke="#000" stroke-width="1"/><path d="M2.5 13.5H13.5" stroke="#000" stroke-width="1"/></svg><div class="a" style="left:1279px;top:0px;width:1278px;height:1389px;background:#f0f0f0;"></div><div class="a" style="left:1279px;top:0px;width:2px;height:1389px;background:#707070;"></div><div class="a" style="left:1279px;top:0px;width:1278px;height:1px;background:#5a5a5a;"></div><div class="a" style="left:1281px;top:1px;width:1276px;height:30px;background:#f1f1f7;"></div><svg class="a" style="left:1288px;top:6px" width="18" height="18" viewBox="0 0 18 18"><defs><linearGradient id="nlg" x1="0" y1="0" x2="0" y2="1"><stop offset="0" stop-color="#e0f490"/><stop offset="0.45" stop-color="#78cc20"/><stop offset="1" stop-color="#1a8a10"/></linearGradient></defs><path d="M1.5 1.5H9.5L13.5 5.5V16.5H1.5Z" fill="#fff" stroke="#505050" stroke-width="1"/><path d="M9.5 1.5V5.5H13.5" fill="#e8e8e8" stroke="#707070" stroke-width="0.8"/><path d="M3 3.2H4M5 3.2H6M7 3.2H8" stroke="#666" stroke-width="1"/><rect x="3" y="6.5" width="9" height="8.5" fill="url(#nlg)"/><path d="M8.2 15.2L15.6 4.2" stroke="#f0a818" stroke-width="2.2"/><path d="M8.2 15.2L9.2 13.6" stroke="#704010" stroke-width="1.6"/><rect x="14.6" y="1.6" width="2.8" height="2.8" fill="#9a0000"/></svg><div class="t" style="left:1310px;top:9.84px;font-size:12px;color:#000;letter-spacing:0.014px;">E:\KaasHosting\Versiebeheer\NewModpack\server-setup-config.yaml - Notepad++</div><svg class="a" style="left:2440px;top:15px" width="10" height="1" viewBox="0 0 10 1"><rect x="0" y="0" width="10" height="1" fill="#000"/></svg><svg class="a" style="left:2485px;top:10px" width="10" height="10" viewBox="0 0 10 10"><rect x="0.5" y="0.5" width="9" height="9" rx="1" fill="none" stroke="#000" stroke-width="1"/></svg><svg class="a" style="left:2531px;top:10px" width="10" height="10" viewBox="0 0 10 10"><path d="M0 0L10 10M10 0L0 10" stroke="#000" stroke-width="1"/></svg><div class="a" style="left:1281px;top:31px;width:1276px;height:18px;background:#ffffff;"></div><div class="t" style="left:1288px;top:34.84px;font-size:12px;color:#000;letter-spacing:-0.321px;">Bestand</div><div class="t" style="left:1344.3px;top:34.84px;font-size:12px;color:#000;letter-spacing:-0.347px;">Bewerken</div><div class="t" style="left:1409px;top:34.84px;font-size:12px;color:#000;letter-spacing:-0.205px;">Zoeken</div><div class="t" style="left:1462px;top:34.84px;font-size:12px;color:#000;letter-spacing:-0.381px;">Beeld</div><div class="t" style="left:1505px;top:34.84px;font-size:12px;color:#000;letter-spacing:-0.304px;">Tekenset</div><div class="t" style="left:1565px;top:34.84px;font-size:12px;color:#000;letter-spacing:-0.47px;">Syntaxis</div><div class="t" style="left:1621px;top:34.84px;font-size:12px;color:#000;letter-spacing:-0.035px;">Instellingen</div><div class="t" style="left:1696px;top:34.84px;font-size:12px;color:#000;letter-spacing:-0.32px;">Gereedschappen</div><div class="t" style="left:1798px;top:34.84px;font-size:12px;color:#000;letter-spacing:0.031px;">Macro</div><div class="t" style="left:1846px;top:34.84px;font-size:12px;color:#000;letter-spacing:-0.084px;">Uitvoeren</div><div class="t" style="left:1909px;top:34.84px;font-size:12px;color:#000;letter-spacing:0.263px;">Plugins</div><div class="t" style="left:1964px;top:34.84px;font-size:12px;color:#000;letter-spacing:-0.525px;">Vensters</div><div class="t" style="left:2020.5px;top:34.84px;font-size:12px;color:#000;letter-spacing:-1.188px;">?</div><svg class="a" style="left:2494px;top:37px" width="8" height="8" viewBox="0 0 8 8"><path d="M4 0V8M0 4H8" stroke="#000" stroke-width="1.2"/></svg><svg class="a" style="left:2518px;top:37px" width="10" height="8" viewBox="0 0 10 8"><path d="M0.5 0.5H9.5L5 8Z" fill="#000"/></svg><svg class="a" style="left:2542px;top:36px" width="10" height="10" viewBox="0 0 10 10"><path d="M0.5 0.5L9.5 9.5M9.5 0.5L0.5 9.5" stroke="#222" stroke-width="1"/></svg><div class="a" style="left:1281px;top:49px;width:1276px;height:2px;background:#e8e8e8;"></div><div class="a" style="left:1281px;top:51px;width:1276px;height:24px;background:#ffffff;"></div><div class="a" style="left:1281px;top:75px;width:1276px;height:1px;background:#e3e3e3;"></div><svg class="a" style="left:1287px;top:54px" width="16" height="16" viewBox="0 0 16 16"><path d="M1.5 0.5H9.5L13.5 4.5V15.5H1.5Z" fill="#fbfbfb" stroke="#c8c8c8"/><circle cx="12" cy="12.5" r="3.5" fill="#3a9a2a"/><path d="M12 10.3V14.7M9.8 12.5H14.2" stroke="#fff" stroke-width="1.4"/></svg><svg class="a" style="left:1309px;top:54px" width="16" height="16" viewBox="0 0 16 16"><path d="M6.5 0.5H12.5L15.5 3.5V11.5H6.5Z" fill="#cfe2fb" stroke="#3a78d8"/><path d="M0.5 5.5H5.5L6.5 6.5H12.5V15.5H0.5Z" fill="#fbe28a" stroke="#e89a30"/><path d="M1 9.5H12" stroke="#f4c850" stroke-width="1"/></svg><svg class="a" style="left:1332px;top:54px" width="16" height="16" viewBox="0 0 16 16"><path d="M0.5 0.5H15.5V15.5H0.5Z" fill="#9a9a9a"/><rect x="3" y="1" width="9.5" height="5" fill="#fff"/><rect x="5" y="2" width="1" height="3" fill="#9a9a9a"/><rect x="3" y="9" width="10" height="6" fill="#fff"/><rect x="4.5" y="11" width="7" height="2.5" fill="#9a9a9a"/></svg><svg class="a" style="left:1356px;top:54px" width="15" height="16" viewBox="0 0 15 16"><rect x="0.5" y="1.5" width="9" height="9" fill="#cfe0f8" stroke="#4a7ed0"/><rect x="2.5" y="3.5" width="9" height="9" fill="#cfe0f8" stroke="#4a7ed0"/><rect x="4.5" y="5.5" width="9" height="10" fill="#3a72c8" stroke="#2a5ab0"/><rect x="6" y="6" width="6" height="3" fill="#d8e8fa"/><rect x="6" y="11.5" width="6" height="3" fill="#e8f4e0"/><rect x="7" y="12.2" width="4" height="1.4" fill="#7ac050"/></svg><svg class="a" style="left:1379px;top:54px" width="16" height="16" viewBox="0 0 16 16"><path d="M0.5 0.5H8.5L12.5 4.5V15.5H0.5Z" fill="#fbfbfb" stroke="#c8c8c8"/><path d="M2.5 4H8M2.5 6H10M2.5 8H10M2.5 10H8M2.5 12H7" stroke="#9a9a9a" stroke-width="0.8"/><circle cx="11.5" cy="12.5" r="3.5" fill="#e05a10"/><path d="M9.5 12.5H13.5" stroke="#fff" stroke-width="1.4"/></svg><svg class="a" style="left:1401px;top:54px" width="16" height="16" viewBox="0 0 16 16"><path d="M0.5 0.5H6.5L9 3V11H0.5Z" fill="#fbfbfb" stroke="#c8c8c8"/><path d="M3.5 2.5H9.5L12 5V13H3.5Z" fill="#fbfbfb" stroke="#c8c8c8"/><path d="M6.5 4.5H11.5L14.5 7.5V15.5H6.5Z" fill="#fbfbfb" stroke="#c8c8c8"/><circle cx="12" cy="12.5" r="3.5" fill="#e05a10"/><path d="M10 12.5H14" stroke="#fff" stroke-width="1.4"/></svg><svg class="a" style="left:1424px;top:54px" width="16" height="16" viewBox="0 0 16 16"><path d="M3.5 0.5H10.5L12.5 2.5V7.5H3.5Z" fill="#cfe2fb" stroke="#3a78d8"/><rect x="0.5" y="6.5" width="15" height="7" rx="2" fill="#bcbcbc" stroke="#404040"/><rect x="2" y="9" width="12" height="2" fill="#8a8a8a"/><rect x="3.5" y="12.5" width="9" height="3" fill="#e8f0fb" stroke="#3a78d8"/></svg><div class="a" style="left:1446px;top:53px;width:1px;height:18px;background:#8a8a8a;"></div><div class="a" style="left:1523px;top:53px;width:1px;height:18px;background:#8a8a8a;"></div><div class="a" style="left:1577px;top:53px;width:1px;height:18px;background:#8a8a8a;"></div><div class="a" style="left:1631px;top:53px;width:1px;height:18px;background:#8a8a8a;"></div><div class="a" style="left:1685px;top:53px;width:1px;height:18px;background:#8a8a8a;"></div><div class="a" style="left:1739px;top:53px;width:1px;height:18px;background:#8a8a8a;"></div><div class="a" style="left:1954px;top:53px;width:1px;height:18px;background:#8a8a8a;"></div><svg class="a" style="left:1456px;top:54px" width="13" height="16" viewBox="0 0 13 16"><path d="M6 0V9M11.5 2.5L5.5 11" stroke="#9a9a9a" stroke-width="1.6"/><circle cx="3.5" cy="12" r="2.6" fill="none" stroke="#9a9a9a" stroke-width="1.8"/><circle cx="7.5" cy="13" r="2.2" fill="none" stroke="#9a9a9a" stroke-width="1.8"/></svg><svg class="a" style="left:1478px;top:54px" width="16" height="16" viewBox="0 0 16 16"><path d="M0.5 0.5H6.5L9 3V11.5H0.5Z" fill="#fff" stroke="#9a9a9a"/><rect x="2" y="2.5" width="4" height="8" fill="#9a9a9a"/><path d="M5.5 4.5H11.5L15.5 8.5V15.5H5.5Z" fill="#fff" stroke="#9a9a9a"/><path d="M7 6H11L14 9V14H7Z" fill="#9a9a9a"/></svg><svg class="a" style="left:1501px;top:54px" width="16" height="16" viewBox="0 0 16 16"><rect x="0.5" y="1.5" width="10" height="13" rx="1" fill="#e8a850" stroke="#b87020"/><rect x="3" y="0.5" width="5" height="3" fill="#f8e8b0" stroke="#b87020"/><path d="M6.5 5.5H12.5L15.5 8.5V15.5H6.5Z" fill="#d4e6fc" stroke="#3a78d8"/></svg><svg class="a" style="left:1533px;top:54px" width="15" height="16" viewBox="0 0 15 16"><path d="M3 4.5H9.5Q14 4.5 14 8.5Q14 12.5 9.5 12.5H7" fill="none" stroke="#9a9a9a" stroke-width="3"/><path d="M0 12.5L4.5 8V15.5Z" fill="#9a9a9a"/></svg><svg class="a" style="left:1556px;top:54px" width="15" height="16" viewBox="0 0 15 16"><path d="M12 12.5H5.5Q1.5 12.5 1.5 8.5Q1.5 4.5 5.5 4.5H9" fill="none" stroke="#9a9a9a" stroke-width="3"/><path d="M15 4.5L10 0V9Z" fill="#9a9a9a"/></svg><svg class="a" style="left:1586px;top:54px" width="15" height="16" viewBox="0 0 15 16"><rect x="0.5" y="6" width="6" height="9" fill="#2a3440"/><rect x="8.5" y="6" width="6" height="9" fill="#2a3440"/><rect x="2" y="2" width="3" height="5" fill="#4a5a6a"/><rect x="10" y="2" width="3" height="5" fill="#4a5a6a"/><rect x="5" y="7" width="5" height="3" fill="#2a3440"/><rect x="1.5" y="11" width="4" height="3" fill="#9ab0c8"/><rect x="9.5" y="11" width="4" height="3" fill="#9ab0c8"/></svg><svg class="a" style="left:1609px;top:54px" width="16" height="16" viewBox="0 0 16 16"><text x="-0.5" y="8.5" font-family="Liberation Serif" font-style="italic" font-weight="bold" font-size="11.5" fill="#2a6ee0">b</text><text x="5.5" y="15.5" font-family="Liberation Serif" font-style="italic" font-weight="bold" font-size="12.5" fill="#4a90f0">a</text><path d="M3.5 7.5L8.5 11" stroke="#3aa040" stroke-width="1.3"/></svg><svg class="a" style="left:1641px;top:54px" width="14" height="16" viewBox="0 0 14 16"><circle cx="6" cy="6" r="5.3" fill="#dceaf8" stroke="#a8c8e8"/><path d="M9 9L13 13.5" stroke="#b07030" stroke-width="2.5"/><path d="M10 2V9M6.5 5.5H13.5" stroke="#30902a" stroke-width="2.6"/></svg><svg class="a" style="left:1664px;top:54px" width="14" height="16" viewBox="0 0 14 16"><circle cx="6" cy="6" r="5.3" fill="#dceaf8" stroke="#a8c8e8"/><path d="M9 9L13 13.5" stroke="#b07030" stroke-width="2.5"/><rect x="6" y="4" width="8" height="3" fill="#e02020"/></svg><svg class="a" style="left:1694px;top:54px" width="16" height="16" viewBox="0 0 16 16"><rect x="0.5" y="0.5" width="14" height="12" fill="#fff" stroke="#9a9a9a"/><rect x="0.5" y="0.5" width="14" height="2" fill="#9a9a9a"/><rect x="6" y="5" width="10" height="11" fill="#9a9a9a"/><path d="M8.5 9L11 6.8L13.5 9Z" fill="#fff"/><path d="M6 3V13" stroke="#9a9a9a"/></svg><svg class="a" style="left:1717px;top:54px" width="16" height="16" viewBox="0 0 16 16"><rect x="0.5" y="0.5" width="14" height="12" fill="#fff" stroke="#9a9a9a"/><rect x="0.5" y="0.5" width="14" height="2" fill="#9a9a9a"/><rect x="6" y="5" width="10" height="11" fill="#9a9a9a"/><path d="M8.5 9L11 6.8L13.5 9Z" fill="#fff"/><path d="M1 6.5H6" stroke="#9a9a9a"/></svg><svg class="a" style="left:1748px;top:54px" width="16" height="16" viewBox="0 0 16 16"><rect x="0" y="2" width="9" height="1" fill="#111"/><rect x="0" y="4" width="9" height="1" fill="#111"/><rect x="0" y="7" width="6" height="1" fill="#111"/><rect x="0" y="11" width="10" height="2" fill="#7aa8ea"/><path d="M7.5 7.5H13.5V12.5H10" fill="none" stroke="#3a78d8" stroke-width="1"/><path d="M11 10L8.5 12.5L11 15Z" fill="#3a78d8"/></svg><svg class="a" style="left:1773px;top:54px" width="12" height="16" viewBox="0 0 12 16"><path d="M5 1H10V15M8 1V15" stroke="#3a80e0" stroke-width="1.6" fill="none"/><path d="M5.5 1.2Q1 1.2 1 4Q1 7 5.5 7Z" fill="#3a80e0"/></svg><div class="a" style="left:1791px;top:51px;width:23px;height:21px;background:#cce8ff;border:1px solid #99d1ff;border-radius:3px"></div><svg class="a" style="left:1796px;top:54px" width="14" height="16" viewBox="0 0 14 16"><g fill="#0010f0"><rect x="0.5" y="1" width="3" height="1.2"/><rect x="5" y="1" width="9" height="1.2"/><rect x="5" y="3.2" width="4" height="1.2"/><rect x="5" y="5.2" width="9" height="2"/><rect x="5" y="8.2" width="6" height="2"/><rect x="0.5" y="11" width="3" height="1.2"/><rect x="5" y="11" width="9" height="1.2"/><rect x="0.5" y="13" width="3" height="1.2"/><rect x="5" y="13" width="2" height="1.2"/><rect x="5" y="15" width="1.2" height="1"/></g><g fill="#e02020"><rect x="2.2" y="3.3" width="1.2" height="1.2"/><rect x="2.2" y="5.5" width="1.2" height="1.2"/><rect x="2.2" y="7.5" width="1.2" height="1.2"/><rect x="2.2" y="9.5" width="1.2" height="1.2"/></g></svg><svg class="a" style="left:1817px;top:54px" width="15" height="16" viewBox="0 0 15 16"><rect x="0.5" y="1.5" width="14" height="12" fill="#fff" stroke="#4a7ed0"/><rect x="0.5" y="1.5" width="14" height="2" fill="#8ab4ea"/><path d="M3 11L6 6H12L9 11Z M5 13L11 7" fill="#f0c040" stroke="#e0a020" stroke-width="0.8"/></svg><svg class="a" style="left:1840px;top:54px" width="16" height="16" viewBox="0 0 16 16"><rect x="0.5" y="0.5" width="15" height="15" fill="#e8e070" stroke="#444a70"/><rect x="9" y="2" width="5" height="5" fill="#90c0f0"/><rect x="2" y="10" width="6" height="5" fill="#80d080"/><path d="M3 1L10 15M8 13L14 8" stroke="#e04040" stroke-width="1"/></svg><svg class="a" style="left:1863px;top:54px" width="16" height="16" viewBox="0 0 16 16"><rect x="0.5" y="0.5" width="12" height="12" fill="#fff" stroke="#4a7ed0"/><rect x="0.5" y="0.5" width="12" height="2" fill="#8ab4ea"/><path d="M5.5 4.5H12L15.5 8V15.5H5.5Z" fill="#d8e8fc" stroke="#3a72d0"/></svg><svg class="a" style="left:1886px;top:54px" width="16" height="16" viewBox="0 0 16 16"><path d="M2.5 0.5H11.5L15.5 4.5V15.5H2.5Z" fill="#fff" stroke="#707070"/><path d="M0.5 14L4 12L8 4Q9 2 10 3" fill="none" stroke="#e02030" stroke-width="2"/></svg><svg class="a" style="left:1910px;top:54px" width="15" height="16" viewBox="0 0 15 16"><path d="M0.5 4.5H5L6 3H13.5V15.5H0.5Z" fill="#f8dcdc" stroke="#d87070"/><path d="M1 8H13" stroke="#e8a0a0"/></svg><svg class="a" style="left:1932px;top:54px" width="16" height="16" viewBox="0 0 16 16"><path d="M0.5 8Q8 0 15.5 8Q8 16 0.5 8Z" fill="#f4f4f4" stroke="#d0a060"/><circle cx="8" cy="8" r="4" fill="#7aa8d8"/><circle cx="8" cy="7.5" r="1.4" fill="#111"/></svg><svg class="a" style="left:1964px;top:54px" width="14" height="16" viewBox="0 0 14 16"><rect x="0.5" y="1.5" width="13" height="13" fill="#fff" stroke="#606060"/><circle cx="7" cy="8" r="3.2" fill="#d00000"/></svg><svg class="a" style="left:1987px;top:54px" width="14" height="16" viewBox="0 0 14 16"><rect x="0.5" y="1.5" width="13" height="13" fill="#fff" stroke="#a0a0a0"/><rect x="3.5" y="4.5" width="7" height="7" fill="#a0a0a0"/></svg><svg class="a" style="left:2010px;top:54px" width="14" height="16" viewBox="0 0 14 16"><rect x="0.5" y="1.5" width="13" height="13" fill="#fff" stroke="#a0a0a0"/><path d="M5 4L10 8L5 12Z" fill="#a0a0a0"/></svg><svg class="a" style="left:2033px;top:54px" width="14" height="16" viewBox="0 0 14 16"><rect x="0.5" y="1.5" width="13" height="13" fill="#fff" stroke="#606060"/><path d="M2 4L6.5 8L2 12Z M6.5 4L11 8L6.5 12Z" fill="#2a70e0"/></svg><svg class="a" style="left:2055px;top:54px" width="16" height="16" viewBox="0 0 16 16"><rect x="0" y="0" width="14" height="13" fill="#9a9a9a"/><rect x="6" y="6" width="10" height="10" fill="#9a9a9a"/><path d="M2 3H12M2 5.5H4M2 8H4M2 10.5H4M5 5.5H7M5 8H7" stroke="#fff" stroke-width="0.9"/><path d="M9 9.5H14V12" stroke="#fff" stroke-width="1.2" fill="none"/></svg><div class="a" style="left:1281px;top:76px;width:1276px;height:27px;background:#f0f0f0;"></div><div class="a" style="left:1283px;top:78px;width:277px;height:22px;background:#c0c0c0;"></div><div class="a" style="left:1283px;top:78px;width:277px;height:1px;background:#ffffff;"></div><div class="a" style="left:1283px;top:78px;width:1px;height:22px;background:#ffffff;"></div><div class="a" style="left:1558px;top:79px;width:2px;height:21px;background:#4a4a4a;"></div><svg class="a" style="left:1285px;top:82px" width="16" height="16" viewBox="0 0 16 16"><path d="M0.5 0.5H13.5L15.5 2.5V15.5H0.5Z" fill="#3a8ae2" stroke="#1a62c4" stroke-width="1"/><rect x="3" y="1" width="9.5" height="5" fill="#8ec6f4"/><rect x="4.4" y="1.8" width="1.3" height="3.2" fill="#1a5ab4"/><rect x="3" y="9" width="10" height="6" fill="#d2ecfa"/><rect x="4" y="10.6" width="8" height="1.4" fill="#2a9a84"/><rect x="4" y="12.8" width="8" height="1.4" fill="#2a9a84"/></svg><div class="t" style="left:1304.5px;top:84.84px;font-size:12px;color:#6e6e6e;letter-spacing:-0.364px;">c580cf13-2aaa-462a-9a27-ab10934e015e.dat</div><div class="a" style="left:1544px;top:85px;width:11px;height:11px;background:#a6a6a6;border-radius:2px"></div><svg class="a" style="left:1546px;top:87px" width="7" height="7" viewBox="0 0 7 7"><path d="M0.5 0.5L6.5 6.5M6.5 0.5L0.5 6.5" stroke="#ececec" stroke-width="1.6"/></svg><div class="a" style="left:1560px;top:78px;width:133px;height:22px;background:#c0c0c0;"></div><div class="a" style="left:1560px;top:78px;width:133px;height:1px;background:#ffffff;"></div><div class="a" style="left:1560px;top:78px;width:1px;height:22px;background:#ffffff;"></div><div class="a" style="left:1691px;top:79px;width:2px;height:21px;background:#4a4a4a;"></div><svg class="a" style="left:1562px;top:82px" width="16" height="16" viewBox="0 0 16 16"><path d="M0.5 0.5H13.5L15.5 2.5V15.5H0.5Z" fill="#3a8ae2" stroke="#1a62c4" stroke-width="1"/><rect x="3" y="1" width="9.5" height="5" fill="#8ec6f4"/><rect x="4.4" y="1.8" width="1.3" height="3.2" fill="#1a5ab4"/><rect x="3" y="9" width="10" height="6" fill="#d2ecfa"/><rect x="4" y="10.6" width="8" height="1.4" fill="#2a9a84"/><rect x="4" y="12.8" width="8" height="1.4" fill="#2a9a84"/></svg><div class="t" style="left:1581.5px;top:84.84px;font-size:12px;color:#6e6e6e;letter-spacing:-0.175px;">server.properties</div><div class="a" style="left:1677px;top:85px;width:11px;height:11px;background:#a6a6a6;border-radius:2px"></div><svg class="a" style="left:1679px;top:87px" width="7" height="7" viewBox="0 0 7 7"><path d="M0.5 0.5L6.5 6.5M6.5 0.5L0.5 6.5" stroke="#ececec" stroke-width="1.6"/></svg><div class="a" style="left:1693px;top:78px;width:93px;height:22px;background:#c0c0c0;"></div><div class="a" style="left:1693px;top:78px;width:93px;height:1px;background:#ffffff;"></div><div class="a" style="left:1693px;top:78px;width:1px;height:22px;background:#ffffff;"></div><div class="a" style="left:1784px;top:79px;width:2px;height:21px;background:#4a4a4a;"></div><svg class="a" style="left:1695px;top:82px" width="16" height="16" viewBox="0 0 16 16"><path d="M0.5 0.5H13.5L15.5 2.5V15.5H0.5Z" fill="#3a8ae2" stroke="#1a62c4" stroke-width="1"/><rect x="3" y="1" width="9.5" height="5" fill="#8ec6f4"/><rect x="4.4" y="1.8" width="1.3" height="3.2" fill="#1a5ab4"/><rect x="3" y="9" width="10" height="6" fill="#d2ecfa"/><rect x="4" y="10.6" width="8" height="1.4" fill="#2a9a84"/><rect x="4" y="12.8" width="8" height="1.4" fill="#2a9a84"/></svg><div class="t" style="left:1714.5px;top:84.84px;font-size:12px;color:#6e6e6e;letter-spacing:-0.279px;">User.php</div><div class="a" style="left:1770px;top:85px;width:11px;height:11px;background:#a6a6a6;border-radius:2px"></div><svg class="a" style="left:1772px;top:87px" width="7" height="7" viewBox="0 0 7 7"><path d="M0.5 0.5L6.5 6.5M6.5 0.5L0.5 6.5" stroke="#ececec" stroke-width="1.6"/></svg><div class="a" style="left:1786px;top:78px;width:94px;height:22px;background:#c0c0c0;"></div><div class="a" style="left:1786px;top:78px;width:94px;height:1px;background:#ffffff;"></div><div class="a" style="left:1786px;top:78px;width:1px;height:22px;background:#ffffff;"></div><div class="a" style="left:1878px;top:79px;width:2px;height:21px;background:#4a4a4a;"></div><svg class="a" style="left:1788px;top:82px" width="16" height="16" viewBox="0 0 16 16"><path d="M0.5 0.5H13.5L15.5 2.5V15.5H0.5Z" fill="#3a8ae2" stroke="#1a62c4" stroke-width="1"/><rect x="3" y="1" width="9.5" height="5" fill="#8ec6f4"/><rect x="4.4" y="1.8" width="1.3" height="3.2" fill="#1a5ab4"/><rect x="3" y="9" width="10" height="6" fill="#d2ecfa"/><rect x="4" y="10.6" width="8" height="1.4" fill="#2a9a84"/><rect x="4" y="12.8" width="8" height="1.4" fill="#2a9a84"/></svg><div class="t" style="left:1807.5px;top:84.84px;font-size:12px;color:#6e6e6e;letter-spacing:-0.463px;">game.sql</div><div class="a" style="left:1864px;top:85px;width:11px;height:11px;background:#a6a6a6;border-radius:2px"></div><svg class="a" style="left:1866px;top:87px" width="7" height="7" viewBox="0 0 7 7"><path d="M0.5 0.5L6.5 6.5M6.5 0.5L0.5 6.5" stroke="#ececec" stroke-width="1.6"/></svg><div class="a" style="left:1880px;top:78px;width:180px;height:22px;background:#c0c0c0;"></div><div class="a" style="left:1880px;top:78px;width:180px;height:1px;background:#ffffff;"></div><div class="a" style="left:1880px;top:78px;width:1px;height:22px;background:#ffffff;"></div><div class="a" style="left:2058px;top:79px;width:2px;height:21px;background:#4a4a4a;"></div><svg class="a" style="left:1882px;top:82px" width="16" height="16" viewBox="0 0 16 16"><path d="M0.5 0.5H13.5L15.5 2.5V15.5H0.5Z" fill="#3a8ae2" stroke="#1a62c4" stroke-width="1"/><rect x="3" y="1" width="9.5" height="5" fill="#8ec6f4"/><rect x="4.4" y="1.8" width="1.3" height="3.2" fill="#1a5ab4"/><rect x="3" y="9" width="10" height="6" fill="#d2ecfa"/><rect x="4" y="10.6" width="8" height="1.4" fill="#2a9a84"/><rect x="4" y="12.8" width="8" height="1.4" fill="#2a9a84"/></svg><div class="t" style="left:1901.5px;top:84.84px;font-size:12px;color:#6e6e6e;letter-spacing:-0.06px;">giveWhitelistBehaald.php</div><div class="a" style="left:2044px;top:85px;width:11px;height:11px;background:#a6a6a6;border-radius:2px"></div><svg class="a" style="left:2046px;top:87px" width="7" height="7" viewBox="0 0 7 7"><path d="M0.5 0.5L6.5 6.5M6.5 0.5L0.5 6.5" stroke="#ececec" stroke-width="1.6"/></svg><div class="a" style="left:2060px;top:78px;width:110px;height:22px;background:#c0c0c0;"></div><div class="a" style="left:2060px;top:78px;width:110px;height:1px;background:#ffffff;"></div><div class="a" style="left:2060px;top:78px;width:1px;height:22px;background:#ffffff;"></div><div class="a" style="left:2168px;top:79px;width:2px;height:21px;background:#4a4a4a;"></div><svg class="a" style="left:2062px;top:82px" width="16" height="16" viewBox="0 0 16 16"><path d="M0.5 0.5H13.5L15.5 2.5V15.5H0.5Z" fill="#3a8ae2" stroke="#1a62c4" stroke-width="1"/><rect x="3" y="1" width="9.5" height="5" fill="#8ec6f4"/><rect x="4.4" y="1.8" width="1.3" height="3.2" fill="#1a5ab4"/><rect x="3" y="9" width="10" height="6" fill="#d2ecfa"/><rect x="4" y="10.6" width="8" height="1.4" fill="#2a9a84"/><rect x="4" y="12.8" width="8" height="1.4" fill="#2a9a84"/></svg><div class="t" style="left:2081.5px;top:84.84px;font-size:12px;color:#6e6e6e;letter-spacing:-0.066px;">Discord.php</div><div class="a" style="left:2154px;top:85px;width:11px;height:11px;background:#a6a6a6;border-radius:2px"></div><svg class="a" style="left:2156px;top:87px" width="7" height="7" viewBox="0 0 7 7"><path d="M0.5 0.5L6.5 6.5M6.5 0.5L0.5 6.5" stroke="#ececec" stroke-width="1.6"/></svg><div class="a" style="left:2170px;top:78px;width:94px;height:22px;background:#c0c0c0;"></div><div class="a" style="left:2170px;top:78px;width:94px;height:1px;background:#ffffff;"></div><div class="a" style="left:2170px;top:78px;width:1px;height:22px;background:#ffffff;"></div><div class="a" style="left:2262px;top:79px;width:2px;height:21px;background:#4a4a4a;"></div><svg class="a" style="left:2172px;top:82px" width="16" height="16" viewBox="0 0 16 16"><path d="M0.5 0.5H13.5L15.5 2.5V15.5H0.5Z" fill="#3a8ae2" stroke="#1a62c4" stroke-width="1"/><rect x="3" y="1" width="9.5" height="5" fill="#8ec6f4"/><rect x="4.4" y="1.8" width="1.3" height="3.2" fill="#1a5ab4"/><rect x="3" y="9" width="10" height="6" fill="#d2ecfa"/><rect x="4" y="10.6" width="8" height="1.4" fill="#2a9a84"/><rect x="4" y="12.8" width="8" height="1.4" fill="#2a9a84"/></svg><div class="t" style="left:2191.5px;top:84.84px;font-size:12px;color:#6e6e6e;letter-spacing:0.109px;">replit.md</div><div class="a" style="left:2248px;top:85px;width:11px;height:11px;background:#a6a6a6;border-radius:2px"></div><svg class="a" style="left:2250px;top:87px" width="7" height="7" viewBox="0 0 7 7"><path d="M0.5 0.5L6.5 6.5M6.5 0.5L0.5 6.5" stroke="#ececec" stroke-width="1.6"/></svg><div class="a" style="left:2264px;top:78px;width:150px;height:22px;background:#c0c0c0;"></div><div class="a" style="left:2264px;top:78px;width:150px;height:1px;background:#ffffff;"></div><div class="a" style="left:2264px;top:78px;width:1px;height:22px;background:#ffffff;"></div><div class="a" style="left:2412px;top:79px;width:2px;height:21px;background:#4a4a4a;"></div><svg class="a" style="left:2266px;top:82px" width="16" height="16" viewBox="0 0 16 16"><path d="M0.5 0.5H13.5L15.5 2.5V15.5H0.5Z" fill="#3a8ae2" stroke="#1a62c4" stroke-width="1"/><rect x="3" y="1" width="9.5" height="5" fill="#8ec6f4"/><rect x="4.4" y="1.8" width="1.3" height="3.2" fill="#1a5ab4"/><rect x="3" y="9" width="10" height="6" fill="#d2ecfa"/><rect x="4" y="10.6" width="8" height="1.4" fill="#2a9a84"/><rect x="4" y="12.8" width="8" height="1.4" fill="#2a9a84"/></svg><div class="t" style="left:2285.5px;top:84.84px;font-size:12px;color:#6e6e6e;letter-spacing:0.083px;">profanity_filter.wlist</div><div class="a" style="left:2398px;top:85px;width:11px;height:11px;background:#a6a6a6;border-radius:2px"></div><svg class="a" style="left:2400px;top:87px" width="7" height="7" viewBox="0 0 7 7"><path d="M0.5 0.5L6.5 6.5M6.5 0.5L0.5 6.5" stroke="#ececec" stroke-width="1.6"/></svg><div class="a" style="left:2414px;top:78px;width:107px;height:22px;background:#c0c0c0;"></div><div class="a" style="left:2414px;top:78px;width:107px;height:1px;background:#ffffff;"></div><div class="a" style="left:2414px;top:78px;width:1px;height:22px;background:#ffffff;"></div><svg class="a" style="left:2416px;top:82px" width="16" height="16" viewBox="0 0 16 16"><path d="M0.5 0.5H13.5L15.5 2.5V15.5H0.5Z" fill="#3a8ae2" stroke="#1a62c4" stroke-width="1"/><rect x="3" y="1" width="9.5" height="5" fill="#8ec6f4"/><rect x="4.4" y="1.8" width="1.3" height="3.2" fill="#1a5ab4"/><rect x="3" y="9" width="10" height="6" fill="#d2ecfa"/><rect x="4" y="10.6" width="8" height="1.4" fill="#2a9a84"/><rect x="4" y="12.8" width="8" height="1.4" fill="#2a9a84"/></svg><div class="t" style="left:2435.5px;top:84.84px;font-size:12px;color:#6e6e6e;letter-spacing:-0.086px;">permissions.json</div><div class="a" style="left:2522px;top:80px;width:17px;height:18px;background:#fdfdfd;border:1px solid #e0e0e0"></div><div class="a" style="left:2540px;top:80px;width:17px;height:18px;background:#fdfdfd;border:1px solid #e0e0e0"></div><svg class="a" style="left:2528px;top:85px" width="5" height="8" viewBox="0 0 5 8"><path d="M4.5 0L0 4L4.5 8Z" fill="#000"/></svg><svg class="a" style="left:2546px;top:85px" width="5" height="8" viewBox="0 0 5 8"><path d="M0.5 0L5 4L0.5 8Z" fill="#000"/></svg><div class="a" style="left:1283px;top:100px;width:1274px;height:2px;background:#ffffff;"></div><div class="a" style="left:1283px;top:102px;width:1274px;height:2px;background:#6a6a6a;"></div><div class="a" style="left:1283px;top:102px;width:2px;height:1263px;background:#696969;"></div><div class="a" style="left:1281px;top:100px;width:1px;height:1266px;background:#ffffff;"></div><div class="a" style="left:1282px;top:102px;width:1px;height:1264px;background:#a8a8a8;"></div><div class="a" style="left:1282px;top:1364px;width:1275px;height:2px;background:#ffffff;"></div><div class="a" style="left:1285px;top:104px;width:1254px;height:1244px;background:#ffffff;"></div><div class="a" style="left:1285px;top:104px;width:63px;height:1243px;background:#e4e4e4;"></div><div class="a" style="left:1348px;top:104px;width:14px;height:1243px;background:#f4f4f4;background-image:repeating-conic-gradient(#e6e6e6 0 25%,#ffffff 0 50%);background-size:2px 2px"></div><pre class="a mono" style="left:1285px;top:104.5751px;width:36.299px;text-align:right;font-size:14.5px;letter-spacing:1.2986px;line-height:19px;color:#808080">14
15
16
17
18
19
20
21
22
23
24
25
26
27
28
29
30
31
32
33
34
35
36
37
38
39
40
41
42
43
44
45
46
47
48
49
50
51
52
53
54
55
56
57
58
59
60
61
62
63
64
65
66
67
68
69
70
71
72
73
74
75
76
77
78</pre><div class="a" style="left:1354px;top:104px;width:1px;height:828px;background:#808080;"></div><div class="a" style="left:1354px;top:955px;width:1px;height:357px;background:#808080;"></div><div class="a" style="left:1355px;top:133px;width:6px;height:1px;background:#808080;"></div><div class="a" style="left:1355px;top:228px;width:6px;height:1px;background:#808080;"></div><div class="a" style="left:1355px;top:665px;width:6px;height:1px;background:#808080;"></div><div class="a" style="left:1355px;top:1121px;width:6px;height:1px;background:#808080;"></div><div class="a" style="left:1355px;top:931px;width:6px;height:1px;background:#808080;"></div><div class="a" style="left:1355px;top:1311px;width:6px;height:1px;background:#808080;"></div><div class="a" style="left:1348px;top:202px;width:13px;height:13px;background:#f3f3f3;border:1px solid #808080"></div><div class="a" style="left:1350px;top:208px;width:9px;height:1px;background:#808080;"></div><div class="a" style="left:1348px;top:278px;width:13px;height:13px;background:#f3f3f3;border:1px solid #808080"></div><div class="a" style="left:1350px;top:284px;width:9px;height:1px;background:#808080;"></div><div class="a" style="left:1348px;top:297px;width:13px;height:13px;background:#f3f3f3;border:1px solid #808080"></div><div class="a" style="left:1350px;top:303px;width:9px;height:1px;background:#808080;"></div><div class="a" style="left:1348px;top:943px;width:13px;height:13px;background:#f3f3f3;border:1px solid #808080"></div><div class="a" style="left:1350px;top:949px;width:9px;height:1px;background:#808080;"></div><div class="a" style="left:1348px;top:1076px;width:13px;height:13px;background:#f3f3f3;border:1px solid #808080"></div><div class="a" style="left:1350px;top:1082px;width:9px;height:1px;background:#808080;"></div><div class="a" style="left:1348px;top:1266px;width:13px;height:13px;background:#f3f3f3;border:1px solid #808080"></div><div class="a" style="left:1350px;top:1272px;width:9px;height:1px;background:#808080;"></div><div class="a" style="left:1403px;top:313px;width:1px;height:361px;background:transparent;background-image:repeating-linear-gradient(#a8a8a8 0 1px,transparent 1px 2px)"></div><pre class="a mono code" style="left:1362.6px;top:104.5751px;font-size:14.5px;letter-spacing:1.2986px;line-height:19px"><span class="d">    - mods/optifine*.jar</span>
<span class="d">    - resources/**</span>
<span class="k">  additionalFiles</span><span class="o">:</span>
<span class="k">  localFiles</span><span class="o">:</span><span class="d"> ~</span>

<span class="k">  installerArguments</span><span class="o">:</span>
<span class="d">    - "--installServer"</span>
<span class="k">  modpackFormat</span><span class="o">:</span><span class="d"> curse</span>

<span class="k">  formatSpecific</span><span class="o">:</span>
<span class="k">    ignoreProject</span><span class="o">:</span>
<span class="d">      - 737481 </span><span class="c"># Chat Toggle</span>
<span class="d">      - 363363 </span><span class="c"># Extreme Sound Muffler</span>
<span class="d">      - 908741 </span><span class="c"># Embeddium</span>
<span class="d">      - 986380 </span><span class="c"># Lighty</span>
<span class="d">      - 844662 </span><span class="c"># Entity Model Features</span>
<span class="d">      - 568563 </span><span class="c"># Entity Texture Features</span>
<span class="d">      - 915902 </span><span class="c"># Euphoria Patches</span>
<span class="d">      - 690971 </span><span class="c"># SeasonHUD</span>
<span class="d">      - 455508 </span><span class="c"># Iris</span>
<span class="d">      - 1089803 </span><span class="c"># Better Modlist</span>
<span class="d">      - 925889 </span><span class="c"># Sounds</span>
<span class="d">      - 1112793 </span><span class="c"># Perception</span>
<span class="d">      - 1133580 </span><span class="c"># Smithing Template Viewer</span>
<span class="d">      - 1274497 </span><span class="c"># Particle Effects Reforged</span>
<span class="d">      - 1254143 </span><span class="c"># Colorwheel</span>
<span class="d">      - 1285475 </span><span class="c"># Colorwheel Patcher</span>
<span class="d">      - 646146 </span><span class="c"># Raise Sound Limit Simplified</span>
<span class="d">      - 1351246 </span><span class="c"># Iris/Oculus Shader Folder</span>

<span class="k">  baseInstallPath</span><span class="o">:</span>

<span class="k">  checkFolder</span><span class="o">:</span><span class="d"> </span><span class="b">true</span>

<span class="k">  installLoader</span><span class="o">:</span><span class="d"> </span><span class="b">true</span>

<span class="k">  installPack</span><span class="o">:</span><span class="d"> </span><span class="b">true</span>

<span class="k">  spongeBootstrapper</span><span class="o">:</span><span class="d"> </span><span class="d">~</span>

<span class="k">  connectTimeout</span><span class="o">:</span><span class="d"> </span><span class="n">90</span>

<span class="k">  readTimeout</span><span class="o">:</span><span class="d"> </span><span class="n">90</span>

<span class="k">launch</span><span class="o">:</span>
<span class="c">  # specifies the max amount of ram the server is supposed to launch with (Xmx)</span>
<span class="k">  maxRam</span><span class="o">:</span><span class="d"> </span><span class="d">5G</span>
<span class="c">  # specifies the minimal amount of ram the server is supposed to launch with (Xms)</span>
<span class="k">  minRam</span><span class="o">:</span><span class="d"> </span><span class="d">3G</span>
<span class="c">  # specifies whether the server is supposed to auto restart after crash</span>
<span class="k">  autoRestart</span><span class="o">:</span><span class="d"> </span><span class="b">false</span>
<span class="k">  javaArgs</span><span class="o">:</span>
<span class="d">    - "-XX:+UseG1GC"</span>

<span class="k">  spongefix</span><span class="o">:</span><span class="d"> </span><span class="b">false</span>
<span class="k">  ramDisk</span><span class="o">:</span><span class="d"> </span><span class="b">false</span>
<span class="k">  checkOffline</span><span class="o">:</span><span class="d"> </span><span class="b">false</span>
<span class="k">  crashLimit</span><span class="o">:</span><span class="d"> </span><span class="n">10</span>
<span class="k">  crashTimer</span><span class="o">:</span><span class="d"> </span><span class="d">60min</span>
<span class="k">  preJavaArgs</span><span class="o">:</span><span class="d"> </span><span class="d">~</span>
<span class="k">  forcedJavaPath</span><span class="o">:</span><span class="d"> </span><span class="d">~</span>
<span class="k">  startCommand</span><span class="o">:</span>
<span class="d">    - "@libraries/net/neoforged/neoforge/{{@loaderversion@}}/{{@os@}}_args.txt"</span>
<span class="d">    - "nogui"</span>
</pre><div class="a" style="left:2539px;top:104px;width:18px;height:1244px;background:#f0f0f0;"></div><div class="a" style="left:2546px;top:321px;width:2px;height:1009px;background:#8a8a8a;border-radius:1px"></div><div class="a" style="left:1285px;top:1348px;width:1254px;height:16px;background:#f0f0f0;"></div><div class="a" style="left:1302px;top:1355px;width:1023px;height:2px;background:#8a8a8a;border-radius:1px"></div><div class="a" style="left:2539px;top:1348px;width:18px;height:16px;background:#f0f0f0;"></div><div class="a" style="left:1281px;top:1366px;width:1276px;height:2px;background:#6a6a6a;"></div><div class="a" style="left:1281px;top:1368px;width:1276px;height:21px;background:#f0f0f0;"></div><div class="t" style="left:1283px;top:1374.84px;font-size:12px;color:#000;letter-spacing:0.067px;">YAML Ain't Markup Language</div><div class="a" style="left:1798px;top:1370px;width:1px;height:19px;background:#d8d8d8;"></div><div class="a" style="left:2017px;top:1370px;width:1px;height:19px;background:#d8d8d8;"></div><div class="a" style="left:2278px;top:1370px;width:1px;height:19px;background:#d8d8d8;"></div><div class="a" style="left:2388px;top:1370px;width:1px;height:19px;background:#d8d8d8;"></div><div class="a" style="left:2508px;top:1370px;width:1px;height:19px;background:#d8d8d8;"></div><div class="a" style="left:2538px;top:1370px;width:1px;height:19px;background:#d8d8d8;"></div><div class="t" style="left:1803.3px;top:1374.84px;font-size:12px;color:#000;letter-spacing:-0.231px;">length : 1.976</div><div class="t" style="left:1885.5px;top:1374.84px;font-size:12px;color:#000;letter-spacing:-0.343px;">lines : 78</div><div class="t" style="left:2023.3px;top:1374.84px;font-size:12px;color:#000;letter-spacing:-0.589px;">Ln : 1</div><div class="t" style="left:2063.5px;top:1374.84px;font-size:12px;color:#000;letter-spacing:-0.455px;">Col : 1</div><div class="t" style="left:2108.4px;top:1374.84px;font-size:12px;color:#000;letter-spacing:-0.623px;">Pos : 1</div><div class="t" style="left:2283px;top:1374.84px;font-size:12px;color:#000;letter-spacing:-0.366px;">Windows (CR LF)</div><div class="t" style="left:2393px;top:1374.84px;font-size:12px;color:#000;letter-spacing:-0.4px;">UTF-8</div><div class="t" style="left:2513px;top:1374.84px;font-size:12px;color:#000;letter-spacing:-0.805px;">INS</div><svg class="a" style="left:2547px;top:1379px" width="10" height="10" viewBox="0 0 10 10"><g fill="#b0b0b0"><rect x="7" y="1" width="2" height="2"/><rect x="4" y="4" width="2" height="2"/><rect x="7" y="4" width="2" height="2"/><rect x="1" y="7" width="2" height="2"/><rect x="4" y="7" width="2" height="2"/><rect x="7" y="7" width="2" height="2"/></g></svg>
</body></html>
